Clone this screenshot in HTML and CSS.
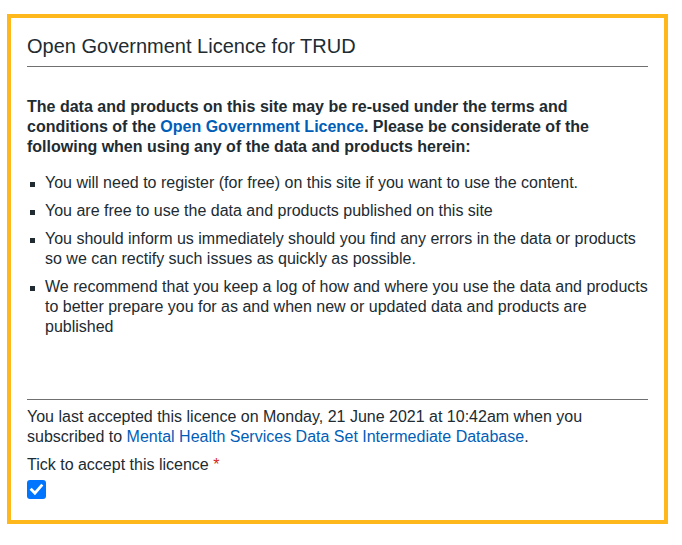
FILE: index.html
```html
<!DOCTYPE html>
<html lang="en">
<head>
<meta charset="utf-8">
<title>Open Government Licence for TRUD</title>
<link rel="stylesheet" href="styles.css">
</head>
<body>
<div class="box">
  <h2 class="title">Open Government Licence for TRUD</h2>
  <p class="intro">The data and products on this site may be re-used under the terms and conditions of the <a href="#">Open Government Licence</a>. Please be considerate of the following when using any of the data and products herein:</p>
  <ul class="terms">
    <li>You will need to register (for free) on this site if you want to use the content.</li>
    <li>You are free to use the data and products published on this site</li>
    <li>You should inform us immediately should you find any errors in the data or products so we can rectify such issues as quickly as possible.</li>
    <li>We recommend that you keep a log of how and where you use the data and products to better prepare you for as and when new or updated data and products are published</li>
  </ul>
  <div class="footer">
    <p class="accepted">You last accepted this licence on Monday, 21 June 2021 at 10:42am when you subscribed to <a href="#">Mental Health Services Data Set Intermediate Database</a>.</p>
    <div class="label">Tick to accept this licence <span class="req">*</span></div>
    <span class="check" role="checkbox" aria-checked="true">
      <svg width="19" height="19" viewBox="0 0 19 19"><path d="M4.6 9.8 L7.9 13.1 L14.4 5.6" fill="none" stroke="#fff" stroke-width="2.8" stroke-linecap="square" stroke-linejoin="miter"/></svg>
    </span>
  </div>
</div>
</body>
</html>
```
FILE: styles.css
```css
* { box-sizing: border-box; }
html, body { margin: 0; padding: 0; background: #fff; }
body {
  font-family: "Liberation Sans", Arial, sans-serif;
  font-size: 16px;
  line-height: 20px;
  color: #212b32;
}
.box {
  width: 661px;
  height: 510px;
  margin: 14px 0 0 7px;
  border: 4px solid #ffb81c;
  padding: 16px 15px 0 16px;
  display: flex;
  flex-direction: column;
}
.title {
  margin: 0 1px 0 0;
  font-size: 20px;
  line-height: 24px;
  font-weight: normal;
  padding-bottom: 8px;
  border-bottom: 1px solid #6e7072;
}
.intro {
  margin: 30px 0 0 0;
  font-weight: bold;
}
a { color: #005eb8; text-decoration: none; }
.terms {
  list-style: none;
  margin: 16px 0 0 0;
  padding: 0;
}
.terms li {
  display: flex;
  margin-bottom: 8px;
}
.terms li::before {
  content: "";
  flex: 0 0 5px;
  width: 5px;
  height: 5px;
  background: #212b32;
  margin: 9px 10px 0 3px;
}
.footer {
  margin-top: auto;
  margin-right: 1px;
  border-top: 1px solid #6e7072;
  padding: 7px 0 21px 0;
}
.accepted { margin: 0; }
.label { margin-top: 8px; }
.req { color: #d5281b; }
.check {
  display: flex;
  align-items: center;
  justify-content: center;
  width: 19px;
  height: 19px;
  margin-top: 5px;
  background: #0075ff;
  border-radius: 3px;
}
.check svg { display: block; }
```
